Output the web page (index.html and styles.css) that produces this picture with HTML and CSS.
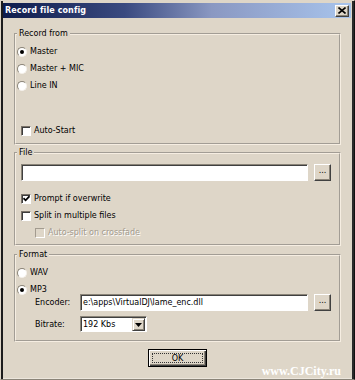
FILE: index.html
```html
<!DOCTYPE html>
<html lang="en">
<head>
  <meta charset="UTF-8">
  <title>Record file config</title>
  <link rel="stylesheet" href="styles.css">
</head>
<body>
  <div class="window">
    <div class="titlebar">
      <span class="title">Record file config</span>
      <span class="close-btn">
        <svg width="8" height="7" viewBox="0 0 8 7"><path d="M0.5 0.5L7.5 6.5M7.5 0.5L0.5 6.5" stroke="#000" stroke-width="1.6"/></svg>
      </span>
    </div>
    <div class="dialog">
      <fieldset class="group group-source">
        <legend>Record from</legend>
        <label class="option first"><span class="radio checked"></span>Master</label>
        <label class="option"><span class="radio"></span>Master + MIC</label>
        <label class="option"><span class="radio"></span>Line IN</label>
        <label class="option check autostart"><span class="checkbox"></span>Auto-Start</label>
      </fieldset>

      <fieldset class="group group-file">
        <legend>File</legend>
        <div class="path-row">
          <div class="textbox wide"></div>
          <span class="browse">...</span>
        </div>
        <label class="option check prompt"><span class="checkbox checked">
          <svg width="7" height="7" viewBox="0 0 7 7"><path d="M0.5 3.2L2.6 5.3L6.5 1.2" fill="none" stroke="#000" stroke-width="1.7"/></svg>
        </span>Prompt if overwrite</label>
        <label class="option check"><span class="checkbox"></span>Split in multiple files</label>
        <label class="option check sub disabled"><span class="checkbox"></span>Auto-split on crossfade</label>
      </fieldset>

      <fieldset class="group group-format">
        <legend>Format</legend>
        <label class="option first"><span class="radio"></span>WAV</label>
        <label class="option"><span class="radio checked"></span>MP3</label>
        <div class="field encoder">
          <span class="field-label">Encoder:</span>
          <div class="textbox wide">e:\apps\VirtualDJ\lame_enc.dll</div>
          <span class="browse">...</span>
        </div>
        <div class="field bitrate">
          <span class="field-label">Bitrate:</span>
          <div class="select">
            <span class="select-value">192 Kbs</span>
            <span class="select-arrow">
              <svg width="7" height="4" viewBox="0 0 7 4"><path d="M0 0h7L3.5 4z" fill="#000"/></svg>
            </span>
          </div>
        </div>
      </fieldset>

      <div class="buttons">
        <span class="btn-ok"><span class="focus">OK</span></span>
      </div>
    </div>
    <span class="watermark">www.CJCity.ru</span>
  </div>
</body>
</html>
```

FILE: styles.css
```css
body {
  margin: 0;
  background: #fff;
  font-family: "DejaVu Sans", sans-serif;
  font-size: 8px;
  color: #000;
}
.window {
  position: relative;
  width: 355px;
  height: 380px;
  box-sizing: border-box;
  background: #ded6c8;
  border: 1px solid #ded6c8;
  border-right-color: #111;
  border-bottom-color: #8a8478;
  box-shadow: inset 2px 0 0 #1c1c1c, inset -2px 0 0 #2a2a2a, inset 0 -1px 0 #ece6dc;
  padding: 2px 3px 3px 2px;
  display: flex;
  flex-direction: column;
}
.titlebar {
  height: 15px;
  flex: none;
  display: flex;
  align-items: center;
  justify-content: space-between;
  padding: 0 2px;
  background: linear-gradient(to right, #0e1c4c 0%, #3a4a80 35%, #8a98c2 60%, #a8c4ec 100%);
}
.title {
  color: #fff;
  font-weight: bold;
  font-size: 8px;
  letter-spacing: 0.1px;
}
.close-btn {
  width: 14px;
  height: 12px;
  box-sizing: border-box;
  background: #ded6c8;
  border: 1px solid;
  border-color: #fff #404040 #404040 #fff;
  box-shadow: inset -1px -1px 0 #8a8478;
  display: flex;
  align-items: center;
  justify-content: center;
}
.dialog {
  flex: 1;
  padding: 11px 10px 0 11px;
  display: flex;
  flex-direction: column;
}
.group {
  margin: 0;
  padding: 0 8px 4px 5px;
  border: 2px groove #f6eee2;
  min-width: 0;
}
.group legend {
  padding: 0 2px;
  margin-left: -4px;
  line-height: 10px;
}
.group-file {
  margin-top: 3px;
  padding-bottom: 3px;
}
.group-format {
  margin-top: 4px;
  padding-bottom: 8px;
}
.option {
  display: flex;
  align-items: center;
  height: 17px;
  white-space: nowrap;
}
.option.first {
  margin-top: 4px;
}
.radio {
  width: 10px;
  height: 10px;
  box-sizing: border-box;
  margin-left: -4px;
  margin-right: 3px;
  border-radius: 50%;
  background: #fff;
  border: 1px solid;
  border-color: #8a8478 #f4f0ea #f4f0ea #8a8478;
  display: flex;
  align-items: center;
  justify-content: center;
}
.radio.checked::after {
  content: "";
  width: 4px;
  height: 4px;
  border-radius: 50%;
  background: #000;
}
.checkbox {
  width: 10px;
  height: 10px;
  box-sizing: border-box;
  margin-right: 3px;
  background: #fff;
  border: 1px solid;
  border-color: #7a7268 #fff #fff #7a7268;
  box-shadow: inset 1px 1px 0 #3c3c3c;
  display: flex;
  align-items: center;
  justify-content: center;
}
.autostart {
  margin-top: 28px;
}
.path-row {
  display: flex;
  gap: 6px;
  margin-top: 6px;
  height: 18px;
}
.textbox {
  height: 17px;
  box-sizing: border-box;
  background: #fff;
  border: 1px solid;
  border-color: #8a8478 #fff #fff #8a8478;
  box-shadow: inset 1px 1px 0 #404040;
  padding: 0 2px;
  line-height: 15px;
  white-space: nowrap;
  overflow: hidden;
}
.textbox.wide {
  flex: 1;
}
.browse {
  width: 17px;
  height: 17px;
  box-sizing: border-box;
  background: #ded6c8;
  border: 1px solid;
  border-color: #fff #404040 #404040 #fff;
  box-shadow: inset -1px -1px 0 #8a8478;
  text-align: center;
  line-height: 12px;
  font-size: 8px;
}
.prompt {
  margin-top: 8px;
}
.option.sub {
  padding-left: 14px;
}
.disabled {
  color: #a39b8f;
  text-shadow: 1px 1px 0 #fff;
}
.disabled .checkbox {
  background: #ded6c8;
  border-color: #a39b8f #fff #fff #a39b8f;
  box-shadow: none;
}
.field {
  display: flex;
  align-items: center;
}
.field-label {
  width: 59px;
  padding-left: 14px;
  box-sizing: border-box;
  flex: none;
}
.encoder {
  margin-top: -4px;
}
.encoder .textbox {
  margin-right: 6px;
}
.bitrate {
  margin-top: 5px;
}
.select {
  width: 67px;
  height: 16px;
  box-sizing: border-box;
  background: #fff;
  border: 1px solid;
  border-color: #8a8478 #fff #fff #8a8478;
  box-shadow: inset 1px 1px 0 #404040;
  display: flex;
  align-items: center;
  justify-content: space-between;
  padding: 1px 1px 0 2px;
}
.select-arrow {
  width: 13px;
  height: 13px;
  box-sizing: border-box;
  background: #ded6c8;
  border: 1px solid;
  border-color: #ded6c8 #404040 #404040 #ded6c8;
  box-shadow: inset 1px 1px 0 #fff, inset -1px -1px 0 #8a8478;
  display: flex;
  align-items: center;
  justify-content: center;
}
.buttons {
  display: flex;
  justify-content: center;
  margin-top: 7px;
}
.btn-ok {
  width: 59px;
  height: 18px;
  box-sizing: border-box;
  border: 1px solid #000;
  background: #ded6c8;
  box-shadow: inset 1px 1px 0 #fff, inset -1px -1px 0 #404040, inset -2px -2px 0 #8a8478;
  padding: 3px;
  display: flex;
}
.focus {
  flex: 1;
  border: 1px dotted #333;
  text-align: center;
  line-height: 9px;
}
.watermark {
  position: absolute;
  right: 13px;
  bottom: 0;
  font-family: "Liberation Serif", serif;
  font-weight: bold;
  font-size: 12px;
  color: #fff;
}
```
